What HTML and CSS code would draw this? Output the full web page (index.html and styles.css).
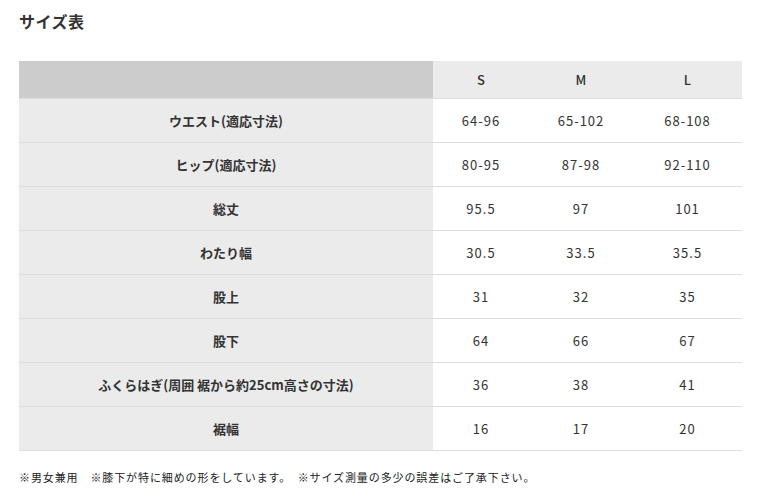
FILE: index.html
```html
<!DOCTYPE html>
<html lang="ja">
<head>
<meta charset="utf-8">
<title>サイズ表</title>
<link rel="stylesheet" href="styles.css">
</head>
<body>
<div class="page">
  <h2 class="title">サイズ表</h2>
  <table class="size-table">
    <colgroup>
      <col class="col-label">
      <col class="col-s">
      <col class="col-m">
      <col class="col-l">
    </colgroup>
    <thead>
      <tr>
        <th class="corner"></th>
        <th>S</th>
        <th>M</th>
        <th>L</th>
      </tr>
    </thead>
    <tbody>
      <tr><th>ウエスト(適応寸法)</th><td>64-96</td><td>65-102</td><td>68-108</td></tr>
      <tr><th>ヒップ(適応寸法)</th><td>80-95</td><td>87-98</td><td>92-110</td></tr>
      <tr><th>総丈</th><td>95.5</td><td>97</td><td>101</td></tr>
      <tr><th>わたり幅</th><td>30.5</td><td>33.5</td><td>35.5</td></tr>
      <tr><th>股上</th><td>31</td><td>32</td><td>35</td></tr>
      <tr><th>股下</th><td>64</td><td>66</td><td>67</td></tr>
      <tr><th>ふくらはぎ(周囲 裾から約25cm高さの寸法)</th><td>36</td><td>38</td><td>41</td></tr>
      <tr><th>裾幅</th><td>16</td><td>17</td><td>20</td></tr>
    </tbody>
  </table>
  <p class="note">※男女兼用　※膝下が特に細めの形をしています。　※サイズ測量の多少の誤差はご了承下さい。</p>
</div>
</body>
</html>
```
FILE: styles.css
```css
html, body {
  margin: 0;
  padding: 0;
  background: #ffffff;
}

body {
  font-family: "Noto Sans CJK JP", "Noto Sans", sans-serif;
  color: #333333;
}

.page {
  padding: 9px 20px 0 19px;
}

.title {
  margin: 0 0 28px;
  font-size: 16px;
  line-height: 24px;
  font-weight: 700;
  letter-spacing: 0.5px;
  color: #333333;
}

.size-table {
  width: 723px;
  border-collapse: collapse;
  table-layout: fixed;
  font-size: 13px;
}

.col-label { width: 414px; }
.col-s { width: 96px; }
.col-m { width: 104px; }
.col-l { width: 109px; }

.size-table th,
.size-table td {
  padding: 0;
  text-align: center;
  vertical-align: middle;
  border-bottom: 1px solid #dedee2;
}

.size-table thead th {
  height: 37px;
  background: #ebebeb;
  font-weight: 500;
  font-size: 13px;
  color: #333333;
}

.size-table thead th.corner {
  background: #cccccc;
}

.size-table tbody th {
  height: 43px;
  background: #ebebeb;
  font-weight: 700;
  color: #333333;
}

.size-table tbody td {
  height: 43px;
  background: #ffffff;
  color: #333333;
  letter-spacing: 1px;
}

.note {
  margin: 17px 0 0;
  font-size: 11px;
  line-height: 18px;
  letter-spacing: 0.9px;
  color: #222222;
}
```
